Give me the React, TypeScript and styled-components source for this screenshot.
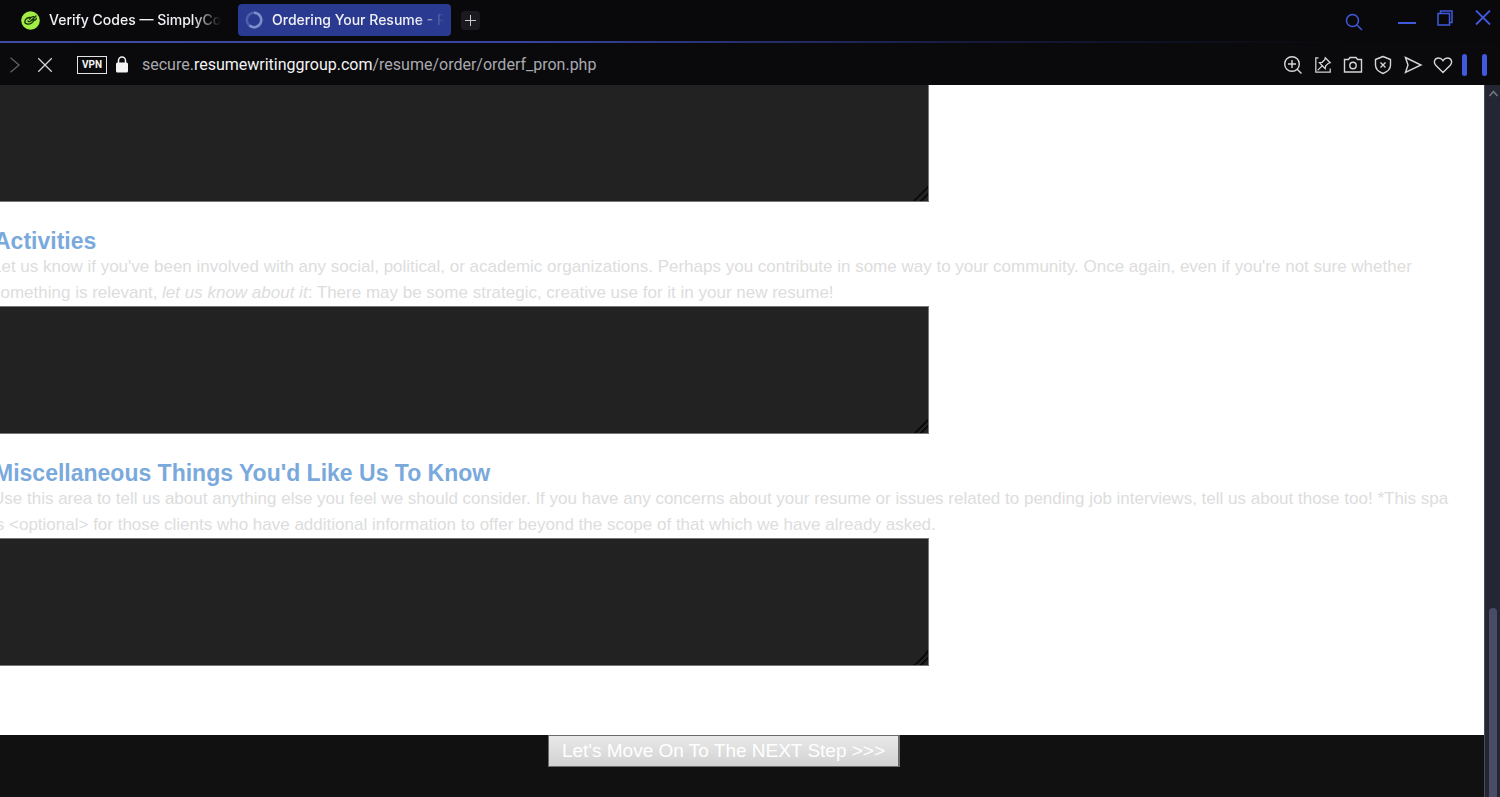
import React from "react";
import styled, { createGlobalStyle } from "styled-components";

const GlobalStyle = createGlobalStyle`
  *, *::before, *::after { box-sizing: border-box; }
  body { margin: 0; background: #111111; }
`;

const Window = styled.div`
  display: flex;
  flex-direction: column;
  height: 100vh;
  overflow: hidden;
  font-family: "Liberation Sans", Arial, sans-serif;
`;

const TabStrip = styled.header`
  display: flex;
  align-items: center;
  flex: none;
  height: 41px;
  padding: 0 2px 1px 14px;
  background: #09090b;
`;

const Accent = styled.div`
  flex: none;
  height: 2px;
  background: linear-gradient(90deg, #3f4da6 0%, #3644a0 35%, #151a3c 65%, #09090b 90%);
`;

const Tab = styled.button<{ $active?: boolean }>`
  display: flex;
  align-items: center;
  gap: 9px;
  width: ${(p) => (p.$active ? 213 : 214)}px;
  height: 32px;
  margin-right: 10px;
  padding: 0 7px;
  border: 0;
  border-radius: 4px;
  background: ${(p) => (p.$active ? "#293a90" : "transparent")};
  color: #f1f1f5;
  font: 500 14px/20px Inter, sans-serif;
  text-align: left;
`;

const TabLabel = styled.span`
  flex: 1;
  overflow: hidden;
  white-space: nowrap;
  mask-image: linear-gradient(90deg, #000 calc(100% - 28px), transparent);
`;

const NewTab = styled.button`
  display: grid;
  place-items: center;
  width: 19px;
  height: 19px;
  padding: 0;
  border: 0;
  border-radius: 4px;
  background: #1b1b1f;
  color: #c9c9cc;
`;

const Spacer = styled.div`
  flex: 1;
`;

const IconButton = styled.button<{ $color?: string }>`
  display: grid;
  place-items: center;
  flex: none;
  width: 30px;
  height: 30px;
  padding: 0;
  border: 0;
  background: none;
  color: ${(p) => p.$color ?? "#d6d6d8"};
`;

const WindowControls = styled.div`
  display: flex;
  align-items: center;
  gap: 8px;
  height: 36px;
  margin-left: 23px;
  padding-bottom: 4px;
`;

const AddressBar = styled.nav`
  display: flex;
  align-items: center;
  flex: none;
  height: 42px;
  padding: 2px 13px 0 0;
  background: #0a0a0c;
`;

const VpnBadge = styled.button`
  width: 30px;
  height: 18px;
  margin: 0 8px 0 17px;
  padding: 0;
  border: 1px solid #e4e4e6;
  background: none;
  color: #f4f4f4;
  font: 700 10px/16px Roboto, sans-serif;
`;

const Url = styled.a`
  margin-left: 13px;
  color: #a9a9b0;
  font: 400 16px/24px Roboto, sans-serif;
  text-decoration: none;
  white-space: nowrap;
`;

const UrlHost = styled.span`
  color: #f3f3f5;
`;

const PanelMark = styled.span`
  width: 5px;
  height: 22px;
  margin-left: 4px;
  border-radius: 3px;
  background: #4059dd;

  & + & {
    margin-left: 15px;
  }
`;

const Viewport = styled.div`
  display: flex;
  flex: 1;
  min-height: 0;
`;

const Page = styled.main`
  flex: 1;
  min-width: 0;
  overflow: hidden;
  background: #111111;
`;

const Form = styled.form`
  margin-left: -8px;
`;

const Sheet = styled.div`
  height: 650px;
  background: #ffffff;
`;

const Section = styled.section`
  padding-bottom: 26px;
`;

const Title = styled.label`
  display: block;
  padding-left: 2px;
  color: #7aa9dc;
  font-size: 23px;
  font-weight: 700;
  line-height: 26px;
`;

const Copy = styled.p`
  margin: 0;
  color: #dddddd;
  font-size: 17px;
  line-height: 26px;
  white-space: nowrap;
`;

const Field = styled.textarea<{ $short?: boolean }>`
  display: block;
  width: 62.8%;
  height: ${(p) => (p.$short ? 117 : 128)}px;
  border: 1px solid #767676;
  border-top-width: ${(p) => (p.$short ? 0 : 1)}px;
  background: #222222;
  color: #dddddd;
  font: 17px/26px "Liberation Sans", Arial, sans-serif;

  &::-webkit-resizer {
    background: linear-gradient(135deg, #222222 50%, #0c0c0c 50% 60%, #222222 60% 72%, #0c0c0c 72% 82%, #222222 82%);
  }
`;

const Actions = styled.div`
  display: flex;
  justify-content: center;
  padding-right: 28px;
`;

const NextButton = styled.button`
  height: 32px;
  padding: 0 13px;
  border: 1px solid #6b6b6b;
  border-right-width: 2px;
  background: linear-gradient(#e9e9e9, #d2d2d2);
  color: #ffffff;
  font: 19px/28px "Liberation Sans", Arial, sans-serif;
  white-space: nowrap;
`;

const ScrollTrack = styled.aside`
  display: flex;
  flex-direction: column;
  align-items: center;
  justify-content: space-between;
  flex: none;
  width: 16px;
  padding: 5px 0 0 1px;
  border-left: 1px solid #4a4c5c;
  background: #242634;
`;

const ScrollThumb = styled.div`
  width: 8px;
  height: 189px;
  border-radius: 4px 4px 0 0;
  background: #494c66;
`;

const Line = ({
  size,
  stroke = 1.4,
  children,
}: {
  size: number;
  stroke?: number;
  children: React.ReactNode;
}) => (
  <svg
    width={size}
    height={size}
    viewBox="0 0 20 20"
    fill="none"
    stroke="currentColor"
    strokeWidth={stroke}
    aria-hidden="true"
  >
    {children}
  </svg>
);

const blue = "#4059dd";

export default function App() {
  return (
    <>
      <GlobalStyle />
      <Window>
        <TabStrip>
          <Tab>
            <svg width="19" height="19" viewBox="0 0 20 20" fill="none" aria-hidden="true">
              <circle cx="10" cy="10" r="9.8" fill="#a3ee45" />
              <g stroke="#17330c" strokeWidth="1.4" strokeLinecap="round" strokeLinejoin="round">
                <path d="M10.2 7C7.400 6.300 4.100 8.500 4 11.100c-.1 3.100 4.600 3.300 7.300 1.500 1.500-1 2.200-2.100 2.200-3.100" />
                <path d="M7.300 10.500c.8.900 1.800.900 2.700.200L15.800 5.300" />
                <path d="M9 8.500c1-1.800 2.800-2.800 4.500-2.500M11.500 9.500h3.500l1.200-1.800" />
              </g>
            </svg>
            <TabLabel>Verify Codes — SimplyCodes</TabLabel>
          </Tab>
          <Tab $active>
            <Line size={18} stroke={2.8}>
              <circle cx="10" cy="10" r="8" stroke="#4d5fac" />
              <path d="M10 2a8 8 0 1 1-5 14.200" stroke="#7f8dcb" />
            </Line>
            <TabLabel>Ordering Your Resume - Resume Writing Group</TabLabel>
          </Tab>
          <NewTab aria-label="New tab">
            <svg width="11" height="11" viewBox="0 0 11 11" stroke="currentColor" aria-hidden="true">
              <path d="M5.500 0v11M0 5.500h11" />
            </svg>
          </NewTab>
          <Spacer />
          <IconButton $color={blue} aria-label="Search tabs">
            <svg width="18" height="24" viewBox="0 0 18 24" fill="none" stroke="currentColor" strokeWidth="1.500" aria-hidden="true">
              <circle cx="7.500" cy="12.500" r="6" />
              <path d="M12 17l5 5" />
            </svg>
          </IconButton>
          <WindowControls>
            <IconButton $color={blue} aria-label="Minimize">
              <svg width="18" height="18" viewBox="0 0 18 18" stroke="currentColor" strokeWidth="2" aria-hidden="true">
                <path d="M0 14h18" />
              </svg>
            </IconButton>
            <IconButton $color={blue} aria-label="Restore">
              <svg width="16" height="16" viewBox="0 0 16 16" fill="none" stroke="currentColor" strokeWidth="1.500" aria-hidden="true">
                <path d="M1 3.500h11.500V15H1zM3.500 3V1H15v11.500h-2" />
              </svg>
            </IconButton>
            <IconButton $color={blue} aria-label="Close">
              <svg width="16" height="16" viewBox="0 0 16 16" stroke="currentColor" strokeWidth="1.800" aria-hidden="true">
                <path d="M1 .500l14 14M15 .500L1 14.500" />
              </svg>
            </IconButton>
          </WindowControls>
        </TabStrip>
        <Accent />
        <AddressBar>
          <IconButton $color="#626266" aria-label="Forward">
            <Line size={18}>
              <path d="M5 2l9.500 8L5 18" />
            </Line>
          </IconButton>
          <IconButton aria-label="Stop">
            <Line size={18}>
              <path d="M2.500 2.500l15 15M17.500 2.500l-15 15" />
            </Line>
          </IconButton>
          <VpnBadge>VPN</VpnBadge>
          <svg width="14" height="18" viewBox="0 0 14 18" fill="none" role="img" aria-label="Secure">
            <path d="M3.500 8V4.500a3.500 3.500 0 0 1 7 0V8" stroke="#f4f4f4" strokeWidth="1.500" />
            <rect x="1" y="6.500" width="12" height="10" rx="1.500" fill="#f4f4f4" />
          </svg>
          <Url href="#">
            secure.<UrlHost>resumewritinggroup.com</UrlHost>/resume/order/orderf_pron.php
          </Url>
          <Spacer />
          <IconButton aria-label="Zoom">
            <Line size={20}>
              <circle cx="9" cy="9" r="7.300" />
              <path d="M14.200 14.200l4.300 4.300M9 5v8M5 9h8" />
            </Line>
          </IconButton>
          <IconButton aria-label="Pin">
            <Line size={18}>
              <path d="M5 2H2v16h16v-4" />
              <path d="M12.500 2l5.500 5.500-2 .5-3 3-.500 3-6.500-6.500 3-.500 3-3zM9 11l-5 5" />
            </Line>
          </IconButton>
          <IconButton aria-label="Snapshot">
            <Line size={20}>
              <path d="M1.500 4.500h4l1.500-2h6l1.500 2h4V17h-17z" />
              <circle cx="10" cy="10.500" r="3.200" />
            </Line>
          </IconButton>
          <IconButton aria-label="Blocked content">
            <Line size={20}>
              <path d="M10 1.500l7.500 3V10c0 4-3 6.800-7.500 8.500C5.500 16.800 2.500 14 2.500 10V4.500z" strokeLinejoin="round" />
              <path d="M7.500 7.500l5 5M12.500 7.500l-5 5" />
            </Line>
          </IconButton>
          <IconButton aria-label="Send">
            <Line size={20}>
              <path d="M2.500 2.500l15.500 7.500-15.500 7.500L5 10z" />
            </Line>
          </IconButton>
          <IconButton aria-label="Add to favorites">
            <Line size={20}>
              <path d="M10 17.500L3 10.600C-.300 7 2 3 5.500 3 7.600 3 9 4.200 10 5.700 11 4.200 12.400 3 14.500 3c3.500 0 5.800 4 2.500 7.600z" />
            </Line>
          </IconButton>
          <PanelMark />
          <PanelMark />
        </AddressBar>
        <Viewport>
          <Page>
            <Form>
              <Sheet>
                <Section>
                  <Field $short aria-label="Details" />
                </Section>
                <Section>
                  <Title htmlFor="activities">Activities</Title>
                  <Copy>
                    Let us know if you've been involved with any social, political, or academic organizations. Perhaps
                    you contribute in some way to your community. Once again, even if you're not sure whether
                    <br />
                    something is relevant, <em>let us know about it</em>: There may be some strategic, creative use for
                    it in your new resume!
                  </Copy>
                  <Field id="activities" />
                </Section>
                <Section>
                  <Title htmlFor="misc">Miscellaneous Things You'd Like Us To Know</Title>
                  <Copy>
                    Use this area to tell us about anything else you feel we should consider. If you have any concerns
                    about your resume or issues related to pending job interviews, tell us about those too! *This spa
                    <br />
                    is &lt;optional&gt; for those clients who have additional information to offer beyond the scope of
                    that which we have already asked.
                  </Copy>
                  <Field id="misc" />
                </Section>
              </Sheet>
              <Actions>
                <NextButton type="button">{"Let's Move On To The NEXT Step >>>"}</NextButton>
              </Actions>
            </Form>
          </Page>
          <ScrollTrack>
            <svg width="9" height="7" viewBox="0 0 9 7" fill="none" stroke="#77797f" strokeWidth="1.500" aria-hidden="true">
              <path d="M.500 6l4-4.500 4 4.500" />
            </svg>
            <ScrollThumb />
          </ScrollTrack>
        </Viewport>
      </Window>
    </>
  );
}
